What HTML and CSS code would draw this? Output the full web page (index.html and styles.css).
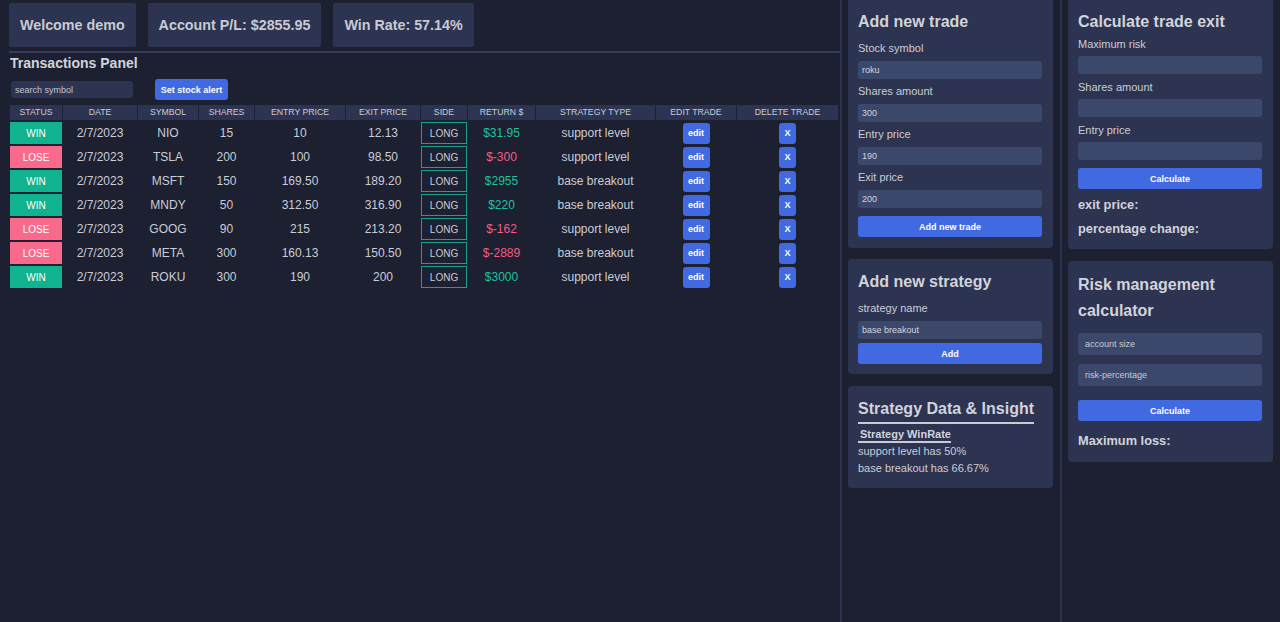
FILE: index.html
```html
<!DOCTYPE html>
<html lang="en">
<head>
<meta charset="utf-8">
<title>Trading Journal</title>
<link rel="stylesheet" href="styles.css">
</head>
<body>
<main class="main">
  <div class="stats">
    <div class="stat">Welcome demo</div>
    <div class="stat">Account P/L: $2855.95</div>
    <div class="stat">Win Rate: 57.14%</div>
  </div>
  <div class="divider"></div>
  <h1 class="panel-title">Transactions Panel</h1>
  <div class="toolbar">
    <input class="search" type="text" placeholder="search symbol">
    <button class="btn btn-alert">Set stock alert</button>
  </div>
  <table class="trades">
    <thead>
      <tr>
        <th class="c-status">STATUS</th>
        <th class="c-date">DATE</th>
        <th class="c-symbol">SYMBOL</th>
        <th class="c-shares">SHARES</th>
        <th class="c-entry">ENTRY PRICE</th>
        <th class="c-exit">EXIT PRICE</th>
        <th class="c-side">SIDE</th>
        <th class="c-return">RETURN $</th>
        <th class="c-strategy">STRATEGY TYPE</th>
        <th class="c-edit">EDIT TRADE</th>
        <th class="c-delete">DELETE TRADE</th>
      </tr>
    </thead>
    <tbody>
      <tr>
        <td class="status win">WIN</td><td>2/7/2023</td><td>NIO</td><td>15</td><td>10</td><td>12.13</td>
        <td class="side">LONG</td><td class="ret pos">$31.95</td><td>support level</td>
        <td><button class="btn btn-edit">edit</button></td><td><button class="btn btn-del">X</button></td>
      </tr>
      <tr>
        <td class="status lose">LOSE</td><td>2/7/2023</td><td>TSLA</td><td>200</td><td>100</td><td>98.50</td>
        <td class="side">LONG</td><td class="ret neg">$-300</td><td>support level</td>
        <td><button class="btn btn-edit">edit</button></td><td><button class="btn btn-del">X</button></td>
      </tr>
      <tr>
        <td class="status win">WIN</td><td>2/7/2023</td><td>MSFT</td><td>150</td><td>169.50</td><td>189.20</td>
        <td class="side">LONG</td><td class="ret pos">$2955</td><td>base breakout</td>
        <td><button class="btn btn-edit">edit</button></td><td><button class="btn btn-del">X</button></td>
      </tr>
      <tr>
        <td class="status win">WIN</td><td>2/7/2023</td><td>MNDY</td><td>50</td><td>312.50</td><td>316.90</td>
        <td class="side">LONG</td><td class="ret pos">$220</td><td>base breakout</td>
        <td><button class="btn btn-edit">edit</button></td><td><button class="btn btn-del">X</button></td>
      </tr>
      <tr>
        <td class="status lose">LOSE</td><td>2/7/2023</td><td>GOOG</td><td>90</td><td>215</td><td>213.20</td>
        <td class="side">LONG</td><td class="ret neg">$-162</td><td>support level</td>
        <td><button class="btn btn-edit">edit</button></td><td><button class="btn btn-del">X</button></td>
      </tr>
      <tr>
        <td class="status lose">LOSE</td><td>2/7/2023</td><td>META</td><td>300</td><td>160.13</td><td>150.50</td>
        <td class="side">LONG</td><td class="ret neg">$-2889</td><td>base breakout</td>
        <td><button class="btn btn-edit">edit</button></td><td><button class="btn btn-del">X</button></td>
      </tr>
      <tr>
        <td class="status win">WIN</td><td>2/7/2023</td><td>ROKU</td><td>300</td><td>190</td><td>200</td>
        <td class="side">LONG</td><td class="ret pos">$3000</td><td>support level</td>
        <td><button class="btn btn-edit">edit</button></td><td><button class="btn btn-del">X</button></td>
      </tr>
    </tbody>
  </table>
</main>

<aside class="col col-mid">
  <section class="card card-trade">
    <h2 class="card-title">Add new trade</h2>
    <div class="field first"><label>Stock symbol</label><input type="text" value="roku"></div>
    <div class="field"><label>Shares amount</label><input type="text" value="300"></div>
    <div class="field"><label>Entry price</label><input type="text" value="190"></div>
    <div class="field"><label>Exit price</label><input type="text" value="200"></div>
    <button class="btn btn-block">Add new trade</button>
  </section>

  <section class="card card-strategy">
    <h2 class="card-title">Add new strategy</h2>
    <div class="field first"><label>strategy name</label><input type="text" value="base breakout"></div>
    <button class="btn btn-block btn-add">Add</button>
  </section>

  <section class="card card-insight">
    <h2 class="card-title underlined">Strategy Data &amp; Insight</h2>
    <div><h3 class="sub-title">Strategy WinRate</h3></div>
    <p class="insight">support level has 50%</p>
    <p class="insight">base breakout has 66.67%</p>
  </section>
</aside>

<aside class="col col-right">
  <section class="card card-exit">
    <h2 class="card-title">Calculate trade exit</h2>
    <div class="field first"><label>Maximum risk</label><input type="text"></div>
    <div class="field"><label>Shares amount</label><input type="text"></div>
    <div class="field"><label>Entry price</label><input type="text"></div>
    <button class="btn btn-block">Calculate</button>
    <p class="result">exit price:</p>
    <p class="result">percentage change:</p>
  </section>

  <section class="card card-risk">
    <h2 class="card-title tall">Risk management calculator</h2>
    <input class="risk-input" type="text" placeholder="account size">
    <input class="risk-input" type="text" placeholder="risk-percentage">
    <button class="btn btn-block btn-risk">Calculate</button>
    <p class="result result-loss">Maximum loss:</p>
  </section>
</aside>
</body>
</html>
```
FILE: styles.css
```css
* {
  box-sizing: border-box;
}

html, body {
  margin: 0;
  padding: 0;
  height: 100%;
}

body {
  display: flex;
  align-items: stretch;
  background: #1c2031;
  color: #cbccd5;
  font-family: "Liberation Sans", Arial, sans-serif;
  overflow: hidden;
}

/* ---------- main panel ---------- */
.main {
  width: 842px;
  flex: none;
  border-right: 2px solid #2b3350;
  padding-top: 3px;
}

.stats {
  display: flex;
  gap: 12px;
  padding-left: 9px;
}

.stat {
  height: 44px;
  padding: 0 11px;
  display: flex;
  align-items: center;
  background: #2c3451;
  border-radius: 2px;
  font-size: 14.3px;
  font-weight: bold;
  color: #c9cad3;
}

.divider {
  margin: 4px 0 0 9px;
  height: 2px;
  background: #353d5b;
}

.panel-title {
  margin: 2px 0 0 10px;
  font-size: 14px;
  line-height: 17px;
  font-weight: bold;
  color: #d2d3db;
}

.toolbar {
  display: flex;
  align-items: center;
  gap: 22px;
  height: 21px;
  margin-top: 7px;
  padding-left: 11px;
}

.search {
  width: 122px;
  height: 17px;
  border: none;
  border-radius: 3px;
  background: #2c3451;
  padding: 0 4px;
  font-family: inherit;
  font-size: 9px;
  color: #cbccd5;
  outline: none;
}

.search::placeholder {
  color: #c4c5cf;
}

.btn {
  border: none;
  background: #4169e1;
  color: #ffffff;
  font-family: inherit;
  font-weight: bold;
  font-size: 9px;
  border-radius: 3px;
  padding: 0;
  cursor: pointer;
}

.btn-alert {
  width: 73px;
  height: 21px;
}

/* ---------- table ---------- */
.trades {
  margin: 3px 0 0 9px;
  width: 830px;
  border-collapse: separate;
  border-spacing: 1px 2px;
  table-layout: fixed;
}

.trades th {
  height: 15px;
  padding: 0;
  background: #2c3451;
  font-size: 8.7px;
  font-weight: normal;
  color: #cbccd5;
  text-align: center;
  line-height: 15px;
}

.c-status { width: 52px; }
.c-date { width: 74px; }
.c-symbol { width: 60px; }
.c-shares { width: 55px; }
.c-entry { width: 90px; }
.c-exit { width: 74px; }
.c-side { width: 46px; }
.c-return { width: 67px; }
.c-strategy { width: 119px; }
.c-edit { width: 80px; }
.c-delete { width: 101px; }

.trades td {
  height: 22px;
  padding: 0;
  text-align: center;
  font-size: 12px;
  color: #cbccd5;
  vertical-align: middle;
}

.trades td.status {
  font-size: 10px;
  color: #ffffff;
}

.status.win {
  background: #11b38f;
}

.status.lose {
  background: #f8698b;
}

.trades td.side {
  border: 1px solid #16a387;
  font-size: 10px;
}

.ret.pos {
  color: #1ec39d;
}

.ret.neg {
  color: #f65c84;
}

.btn-edit {
  width: 27px;
  height: 21px;
  display: inline-block;
  vertical-align: middle;
}

.btn-del {
  width: 17px;
  height: 21px;
  display: inline-block;
  vertical-align: middle;
}

/* ---------- side columns ---------- */
.col {
  flex: none;
  padding: 0 7px 0 6px;
}

.col-mid {
  width: 220px;
  border-right: 2px solid #2b3350;
}

.col-right {
  width: 218px;
}

.card {
  background: #2c3451;
  border-radius: 4px;
  padding: 12px 11px 11px 10px;
}

.card-trade,
.card-exit {
  border-top-left-radius: 0;
  border-top-right-radius: 0;
}

.card-title {
  margin: 0;
  font-size: 16px;
  line-height: 20px;
  font-weight: bold;
  color: #d2d3db;
}

.card-title.tall {
  line-height: 26px;
}

.field {
  margin-top: 5px;
}

.field.first {
  margin-top: 9px;
}

.field label {
  display: block;
  font-size: 11px;
  line-height: 14px;
  color: #cbccd5;
}

.field input,
.risk-input {
  display: block;
  width: 100%;
  border: none;
  border-radius: 3px;
  background: #3c486b;
  font-family: inherit;
  font-size: 9px;
  color: #d4d5dd;
  outline: none;
}

.field input {
  height: 18px;
  margin-top: 6px;
  padding: 0 4px;
}

.btn-block {
  display: block;
  width: 100%;
  height: 21px;
  margin-top: 8px;
}

/* strategy card */
.card-strategy {
  margin-top: 11px;
  padding: 13px 11px 10px 10px;
}

.card-strategy .btn-add {
  margin-top: 4px;
}

/* insight card */
.card-insight {
  margin-top: 12px;
  padding: 13px 11px 11px 10px;
}

.underlined {
  display: inline-block;
  padding-bottom: 3px;
  border-bottom: 2px solid #c9cad3;
}

.sub-title {
  display: inline-block;
  margin: 1px 0 0 0;
  padding-left: 2px;
  font-size: 11px;
  line-height: 14px;
  font-weight: bold;
  border-bottom: 2px solid #c9cad3;
  color: #d2d3db;
}

.insight {
  margin: 0;
  font-size: 11px;
  line-height: 17px;
  color: #cbccd5;
}

/* exit card */
.card-exit {
  padding-bottom: 12px;
}

.card-exit .field.first {
  margin-top: 5px;
}

.card-exit .field {
  margin-top: 6px;
}

.card-exit .field input {
  margin-top: 5px;
}

.result {
  margin: 7px 0 0 0;
  font-size: 12.8px;
  line-height: 17px;
  font-weight: bold;
  color: #d2d3db;
}

/* risk card */
.card-risk {
  margin-top: 12px;
  padding: 11px 11px 13px 10px;
}

.risk-input {
  height: 22px;
  margin-top: 9px;
  padding: 0 7px;
}

.risk-input::placeholder {
  color: #c9cad3;
}

.btn-risk {
  margin-top: 14px;
}

.result-loss {
  margin-top: 11px;
}
```
